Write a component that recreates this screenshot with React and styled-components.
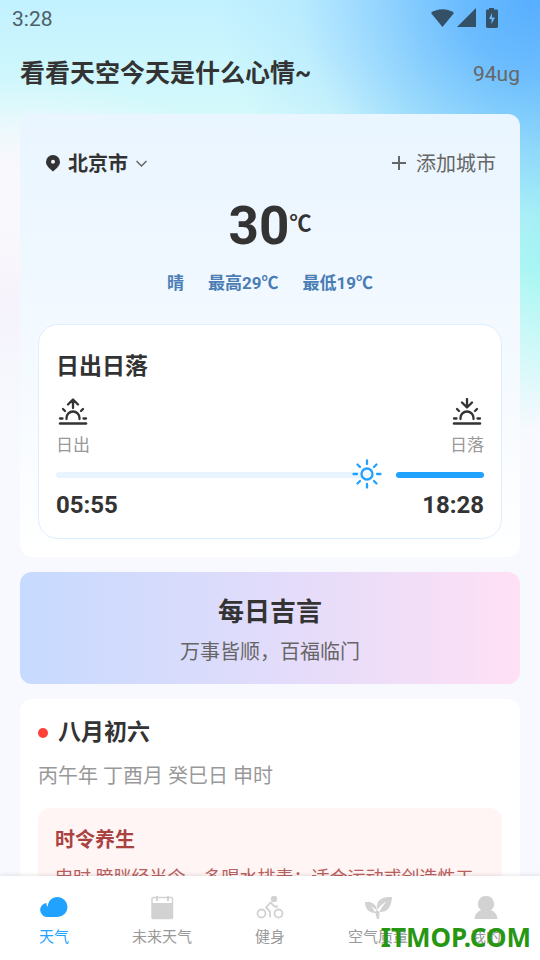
import styled, { createGlobalStyle } from "styled-components";

const GlobalStyle = createGlobalStyle`
  * {
    box-sizing: border-box;
  }

  body {
    margin: 0;
    font-family: Roboto, "Noto Sans CJK SC", sans-serif;
    color: #333;
  }

  h1, h2, h3, p {
    margin: 0;
  }

  button {
    border: none;
    padding: 0;
    background: none;
    font: inherit;
    color: inherit;
    cursor: pointer;
  }
`;

const Screen = styled.div`
  display: flex;
  flex-direction: column;
  height: 100vh;
  overflow: hidden;
  background:
    linear-gradient(180deg, rgba(247, 249, 254, 0) 270px, #f7f9fe 430px),
    radial-gradient(ellipse 320px 290px at 100% 0, #57aeff 0%, rgba(100, 182, 255, 0.9) 25%, rgba(130, 200, 255, 0.7) 50%, rgba(160, 220, 255, 0.3) 75%, rgba(190, 238, 255, 0) 100%),
    linear-gradient(270deg, #a6f8f2 0%, rgba(190, 248, 248, 0) 35%),
    radial-gradient(ellipse 260px 110px at 0 190px, #f9f8fd 20%, rgba(249, 248, 253, 0) 100%),
    linear-gradient(180deg, #c2f1ff 0, #d4f9fb 110px, #f7fafe 200px, #f9f5fb 250px, #f4f0fc 320px, #f7f9fe 440px);
`;

const StatusBar = styled.div`
  display: flex;
  flex: none;
  justify-content: space-between;
  align-items: center;
  height: 38px;
  padding: 0 38px 0 12px;
  font-size: 21px;
  color: #4c6068;
`;

const StatusIcons = styled.div`
  display: flex;
  align-items: center;
  gap: 3px;
  padding-bottom: 2px;
`;

const Header = styled.header`
  display: flex;
  flex: none;
  justify-content: space-between;
  align-items: center;
  height: 76px;
  padding: 0 20px 5px;
`;

const Title = styled.h1`
  font-size: 25px;
  line-height: 36px;
  font-weight: 700;
`;

const AirValue = styled.span`
  font-size: 21px;
  color: #666;
`;

const Content = styled.main`
  display: flex;
  flex: 1;
  flex-direction: column;
  gap: 15px;
  min-height: 0;
  padding: 0 20px;
  overflow-y: auto;
  scrollbar-width: none;
`;

const Card = styled.section`
  flex: none;
  padding: 18px;
  border-radius: 12px;
  background: ${(props) => props.$background || "#fff"};
`;

const CityRow = styled.div`
  display: flex;
  justify-content: space-between;
  align-items: center;
  height: 64px;
  padding: 0 6px 0 8px;
`;

const CityButton = styled.button`
  display: flex;
  align-items: center;
  gap: 8px;
  font-size: 20px;
  line-height: 30px;
  font-weight: ${(props) => (props.$strong ? 700 : 400)};
  color: ${(props) => (props.$strong ? "#333" : "#666")};
`;

const Temperature = styled.div`
  display: flex;
  justify-content: center;
  align-items: flex-start;
  height: 60px;
  font-size: 53px;
  line-height: 60px;
  font-weight: 700;
`;

const Degree = styled.span`
  font-size: 22px;
  line-height: 56px;
  font-weight: 700;
`;

const Summary = styled.div`
  display: flex;
  justify-content: center;
  gap: 24px;
  padding: 14px 0 28px;
  font-size: 17px;
  line-height: 26px;
  font-weight: 700;
  color: #4a7db5;
`;

const SunPanel = styled.div`
  padding: 24px 17px 20px;
  border: 1px solid #dceeff;
  border-radius: 20px;
  background: #fff;
`;

const SubTitle = styled.h2`
  font-size: 23px;
  line-height: 36px;
  font-weight: 700;
`;

const SunRow = styled.div`
  display: flex;
  justify-content: space-between;
  padding-top: 13px;
`;

const SunItem = styled.div`
  display: flex;
  flex-direction: column;
  align-items: center;
  gap: 6px;
  font-size: 17px;
  line-height: 26px;
  color: #999;
`;

const Track = styled.div`
  display: flex;
  align-items: center;
  height: 34px;
`;

const TrackPart = styled.div`
  flex: ${(props) => props.$grow};
  height: 6px;
  border-radius: 3px;
  background: ${(props) => props.$color};
`;

const SunMarker = styled.svg`
  flex: none;
  margin: 0 14px 2px -15px;
`;

const Times = styled.div`
  display: flex;
  justify-content: space-between;
  font-size: 24px;
  line-height: 26px;
  font-weight: 700;
`;

const Blessing = styled(Card)`
  display: flex;
  flex-direction: column;
  align-items: center;
  gap: 4px;
  padding: 20px 16px 16px;
  background: linear-gradient(90deg, #c6daff, #e4dcfa 55%, #ffe0f5);
`;

const BlessingTitle = styled.h2`
  font-size: 26px;
  line-height: 40px;
  font-weight: 700;
`;

const BlessingText = styled.p`
  font-size: 20px;
  line-height: 32px;
  color: #666;
`;

const DateRow = styled.div`
  display: flex;
  align-items: center;
  gap: 10px;
`;

const Dot = styled.span`
  width: 10px;
  height: 10px;
  border-radius: 50%;
  background: #ff4238;
`;

const DateCard = styled(Card)`
  padding-top: 16px;
`;

const LunarText = styled.p`
  padding: 9px 0 16px;
  font-size: 20px;
  line-height: 32px;
  color: #999;
`;

const HealthBox = styled.div`
  padding: 16px 17px;
  border-radius: 12px;
  background: #fff5f4;
  color: #aa4242;
`;

const HealthTitle = styled.h3`
  font-size: 20px;
  line-height: 32px;
  font-weight: 700;
`;

const HealthText = styled.p`
  padding-top: 6px;
  font-size: 18px;
  line-height: 32px;
  color: #bb6060;
`;

const TabBar = styled.nav`
  position: relative;
  display: flex;
  flex: none;
  height: 84px;
  background: #fff;
  box-shadow: 0 -1px 4px rgba(0, 0, 0, 0.1);
`;

const Tab = styled.button`
  display: flex;
  flex: 1;
  flex-direction: column;
  align-items: center;
  gap: 5px;
  padding-top: 17px;
  font-size: 15px;
  line-height: 22px;
  color: ${(props) => (props.$active ? "#22a2ff" : "#999")};

  svg {
    color: ${(props) => (props.$active ? "#22a2ff" : "#d2d2d2")};
  }
`;

const Watermark = styled.span`
  position: absolute;
  right: 9px;
  bottom: 5px;
  font-family: "Noto Sans", sans-serif;
  font-size: 26px;
  line-height: 36px;
  font-weight: 700;
  color: #279612;
  pointer-events: none;
`;

function SunHorizonIcon({ down }) {
  return (
    <svg width="30" height="28" viewBox="0 0 30 28" fill="none" stroke="#333" strokeWidth="2.3" strokeLinecap="round" strokeLinejoin="round">
      <path d={down ? "M15 1v8M10 4.500l5 5 5-5" : "M15 10V2M10 6.500l5-5 5 5"} />
      <path d="M8.500 21v-1a6.500 6.500 0 0 1 13 0v1M5 11l2 2M25 11l-2 2M2 20.500h2.500M25.500 20.500H28" />
      <path d="M2 25.500h26" strokeWidth="2.5" />
    </svg>
  );
}

const tabs = [
  {
    name: "天气",
    icon: <path fill="currentColor" d="M8 24a7 7 0 0 1-1.500-14c-.2 1.700.2 2.800 1.300 3.500C8 8 12 4 17.500 4a10 10 0 0 1 0 20z" />,
  },
  {
    name: "未来天气",
    icon: (
      <>
        <rect x="4" y="4.5" width="20.5" height="21" rx="1" fill="none" stroke="currentColor" strokeWidth="1.5" />
        <path fill="currentColor" d="M4 10h21v15H4zM8 3h2v5H8zM19 3h2v5h-2z" />
      </>
    ),
  },
  {
    name: "健身",
    icon: (
      <>
        <circle cx="18" cy="6" r="3.2" fill="currentColor" />
        <g fill="none" stroke="currentColor" strokeWidth="1.8">
          <circle cx="5.5" cy="20.5" r="4" />
          <circle cx="22.5" cy="20.5" r="4" />
          <path d="M14 24.500v-6l-4-4 4.500-5 4 4H22" strokeLinejoin="round" />
        </g>
      </>
    ),
  },
  {
    name: "空气质量",
    icon: (
      <path
        fill="currentColor"
        d="M28 4c-8-.5-14 1.500-15 8.500-.2 1.500 0 2.500.3 4C16 13 19 10.500 22.500 8.500 19.500 12 17 15 15.500 19c7 .5 12-4 12.500-15zM1 9c6-.5 10 1 11.500 6l.3 3c-2-2.500-4-3.800-6.300-5 2 2 3.800 4.300 5 7C5 20 1 16 1 9zM11 19l2-2 2.500 2-.5 7h-2z"
      />
    ),
  },
  {
    name: "我的",
    icon: <path fill="currentColor" d="M14 3a8 8 0 0 1 5 14.300c3.500 1 6 4 6.500 8.700H2.500c.5-4.700 3-7.700 6.500-8.700A8 8 0 0 1 14 3z" />,
  },
];

function App() {
  return (
    <Screen>
      <GlobalStyle />
      <StatusBar>
        <span>3:28</span>
        <StatusIcons>
          <svg width="23" height="20" viewBox="0 0 23 20" fill="#335066">
            <path d="M0 5c6-5 17-5 23 0L11.500 19z" />
          </svg>
          <svg width="20" height="20" viewBox="0 0 20 20" fill="#335066">
            <path d="M19 0v19H0z" />
          </svg>
          <svg width="22" height="20" viewBox="0 0 22 20" fill="#335066">
            <path fillRule="evenodd" d="M9 1.500V0h5v1.500h2.500c1 0 1.500.5 1.500 1.500v15c0 1-.5 2-1.500 2h-9c-1 0-1.500-1-1.500-2V3c0-1 .5-1.500 1.500-1.500zM12 5l-3 6h2.500v5l3.500-6.500h-3z" />
          </svg>
        </StatusIcons>
      </StatusBar>
      <Header>
        <Title>看看天空今天是什么心情~</Title>
        <AirValue>94ug</AirValue>
      </Header>
      <Content>
        <Card $background="linear-gradient(180deg, #e9f5ff, #f3f9ff 50%, #fff)">
          <CityRow>
            <CityButton $strong>
              <svg width="14" height="20" viewBox="0 0 14 20">
                <path fill="#333" fillRule="evenodd" d="M7 1a7 7 0 0 1 7 7c0 3.500-3 6-7 9.500C3 14 0 11.500 0 8a7 7 0 0 1 7-7zm0 4.800a2 2 0 1 0 0 4 2 2 0 0 0 0-4z" />
              </svg>
              北京市
              <svg width="11" height="8" viewBox="0 0 11 8" fill="none" stroke="#666" strokeWidth="1.5">
                <path d="M.5 1l5 5 5-5" />
              </svg>
            </CityButton>
            <CityButton>
              <svg width="18" height="20" viewBox="0 0 18 20" stroke="#666" strokeWidth="2">
                <path d="M9 2v14M2 9h14" />
              </svg>
              添加城市
            </CityButton>
          </CityRow>
          <Temperature>
            30<Degree>℃</Degree>
          </Temperature>
          <Summary>
            <span>晴</span>
            <span>最高29℃</span>
            <span>最低19℃</span>
          </Summary>
          <SunPanel>
            <SubTitle>日出日落</SubTitle>
            <SunRow>
              <SunItem>
                <SunHorizonIcon />
                日出
              </SunItem>
              <SunItem>
                <SunHorizonIcon down />
                日落
              </SunItem>
            </SunRow>
            <Track>
              <TrackPart $grow={311} $color="#e8f4ff" />
              <SunMarker width="30" height="30" viewBox="0 0 30 30" fill="none" stroke="#22a2ff" strokeWidth="2.3" strokeLinecap="round">
                <circle cx="15" cy="15" r="5.5" fill="#f4faff" />
                <path d="M15 1.500v3.500M15 25v3.500M1.500 15H5M25 15h3.500M5.500 5.500L8 8M22 22l2.500 2.500M5.500 24.500L8 22M22 8l2.500-2.500" />
              </SunMarker>
              <TrackPart $grow={88} $color="#22a2ff" />
            </Track>
            <Times>
              <span>05:55</span>
              <span>18:28</span>
            </Times>
          </SunPanel>
        </Card>
        <Blessing>
          <BlessingTitle>每日吉言</BlessingTitle>
          <BlessingText>万事皆顺，百福临门</BlessingText>
        </Blessing>
        <DateCard>
          <DateRow>
            <Dot />
            <SubTitle>八月初六</SubTitle>
          </DateRow>
          <LunarText>丙午年 丁酉月 癸巳日 申时</LunarText>
          <HealthBox>
            <HealthTitle>时令养生</HealthTitle>
            <HealthText>申时 膀胱经当令，多喝水排毒；适合运动或创造性工作。</HealthText>
          </HealthBox>
        </DateCard>
      </Content>
      <TabBar>
        {tabs.map((tab, index) => (
          <Tab key={tab.name} $active={index === 0}>
            <svg width="29" height="28" viewBox="0 0 29 28">{tab.icon}</svg>
            {tab.name}
          </Tab>
        ))}
        <Watermark>ITMOP.COM</Watermark>
      </TabBar>
    </Screen>
  );
}

export default App;
